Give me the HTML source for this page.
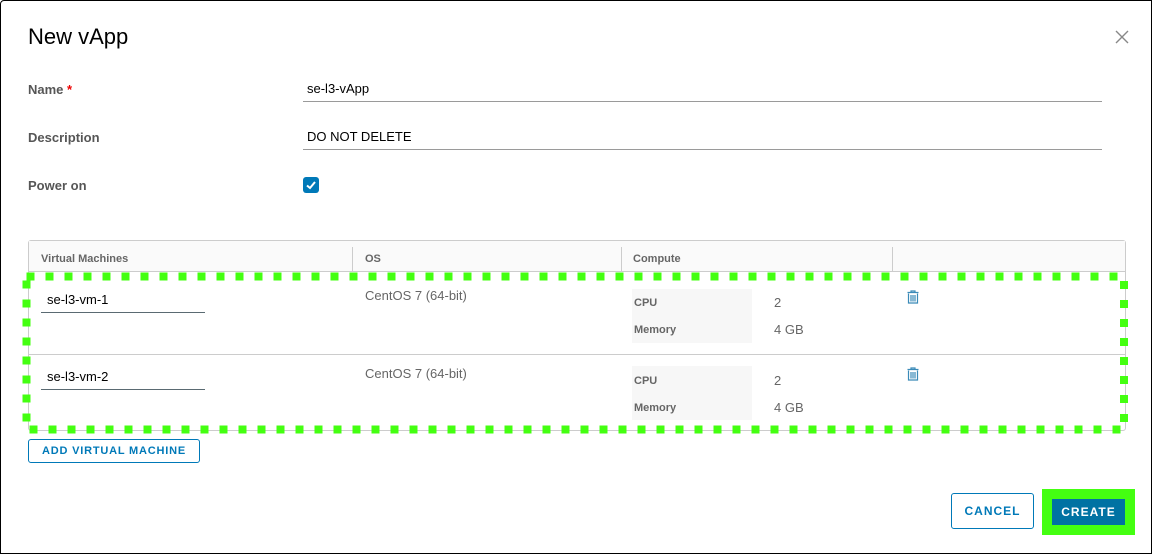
<!DOCTYPE html>
<html><head><style>
*{margin:0;padding:0;box-sizing:border-box}
body{width:1152px;height:554px;background:#fff;font-family:"Liberation Sans",sans-serif;position:relative;overflow:hidden}
.frame{position:absolute;left:0;top:0;width:1152px;height:554px;border:1px solid #000;border-radius:4px 0 0 0}
.a{position:absolute}
.lbl{font-size:13px;font-weight:bold;color:#565656}
.inp{position:absolute;border-bottom:1px solid #9a9a9a;font-size:13px;color:#000;padding-left:4px}
.th{position:absolute;top:253px;font-size:11px;font-weight:bold;color:#666}
.td{font-size:13px;color:#666}
.cl{font-size:11px;font-weight:bold;color:#666}
</style></head><body>
<div class="frame"></div>
<div class="a" style="left:28px;top:24px;font-size:22px;color:#000">New vApp</div>
<svg class="a" style="left:1115px;top:30px" width="14" height="14"><path d="M1 1L13 13M13 1L1 13" stroke="#888" stroke-width="1.4"/></svg>
<div class="a lbl" style="left:28px;top:82px">Name <span style="color:#e00">*</span></div>
<div class="inp" style="left:303px;top:81px;width:799px;height:21px">se-l3-vApp</div>
<div class="a lbl" style="left:28px;top:130px">Description</div>
<div class="inp" style="left:303px;top:129px;width:799px;height:21px">DO NOT DELETE</div>
<div class="a lbl" style="left:28px;top:178px">Power on</div>
<div class="a" style="left:303px;top:177px;width:16px;height:16px;background:#0079b8;border-radius:3px"><svg width="16" height="16"><path d="M4 8.5L7 11L12 5" stroke="#fff" stroke-width="2" fill="none"/></svg></div>

<div class="a" style="left:28px;top:240px;width:1098px;height:191px;border:1px solid #ccc;border-radius:3px"></div>
<div class="a" style="left:29px;top:241px;width:1096px;height:31px;background:#fafafa;border-bottom:1px solid #ccc"></div>
<div class="a" style="left:352px;top:247px;width:1px;height:24px;background:#ccc"></div>
<div class="a" style="left:621px;top:247px;width:1px;height:24px;background:#ccc"></div>
<div class="a" style="left:892px;top:247px;width:1px;height:24px;background:#ccc"></div>
<div class="th" style="left:41px">Virtual Machines</div>
<div class="th" style="left:365px">OS</div>
<div class="th" style="left:633px">Compute</div>
<div class="a" style="left:29px;top:354px;width:1096px;height:1px;background:#ccc"></div>

<div class="inp" style="left:41px;top:292px;width:164px;height:21px;padding-left:6px;border-color:#5a6a72">se-l3-vm-1</div>
<div class="a td" style="left:365px;top:288px">CentOS 7 (64-bit)</div>
<div class="a" style="left:632px;top:289px;width:120px;height:54px;background:#f7f7f7"></div>
<div class="a cl" style="left:634px;top:297px">CPU</div>
<div class="a td" style="left:774px;top:295px">2</div>
<div class="a cl" style="left:634px;top:324px">Memory</div>
<div class="a td" style="left:774px;top:322px">4 GB</div>
<svg class="a" style="left:906px;top:290px" width="14" height="14"><path d="M1.5 2.5H12.5M5 2.5V1H9V2.5M2.5 3.5V13H11.5V3.5M5 5V11.5M7 5V11.5M9 5V11.5" stroke="#3a8ab8" stroke-width="1.2" fill="none"/></svg>

<div class="inp" style="left:41px;top:369px;width:164px;height:21px;padding-left:6px;border-color:#5a6a72">se-l3-vm-2</div>
<div class="a td" style="left:365px;top:366px">CentOS 7 (64-bit)</div>
<div class="a" style="left:632px;top:366px;width:120px;height:54px;background:#f7f7f7"></div>
<div class="a cl" style="left:634px;top:375px">CPU</div>
<div class="a td" style="left:774px;top:373px">2</div>
<div class="a cl" style="left:634px;top:402px">Memory</div>
<div class="a td" style="left:774px;top:400px">4 GB</div>
<svg class="a" style="left:906px;top:367px" width="14" height="14"><path d="M1.5 2.5H12.5M5 2.5V1H9V2.5M2.5 3.5V13H11.5V3.5M5 5V11.5M7 5V11.5M9 5V11.5" stroke="#3a8ab8" stroke-width="1.2" fill="none"/></svg>

<svg class="a" style="left:0;top:0" width="1152" height="554"><rect x="26.5" y="276.5" width="1097.5" height="153" fill="none" stroke="#44ff11" stroke-width="8" stroke-dasharray="8 11"/></svg>

<div class="a" style="left:28px;top:439px;width:172px;height:24px;border:1px solid #0079b8;border-radius:3px;color:#0079b8;font-size:11px;font-weight:bold;letter-spacing:0.8px;text-align:center;line-height:22px">ADD VIRTUAL MACHINE</div>
<div class="a" style="left:951px;top:493px;width:83px;height:36px;border:1px solid #0079b8;border-radius:3px;color:#0079b8;font-size:12px;font-weight:bold;letter-spacing:1px;text-align:center;line-height:34px">CANCEL</div>
<div class="a" style="left:1042px;top:489px;width:93px;height:46px;background:#44ff11"></div>
<div class="a" style="left:1052px;top:499px;width:73px;height:26px;background:#0072a3;color:#fff;font-size:12px;font-weight:bold;letter-spacing:1px;text-align:center;line-height:26px">CREATE</div>
</body></html>
